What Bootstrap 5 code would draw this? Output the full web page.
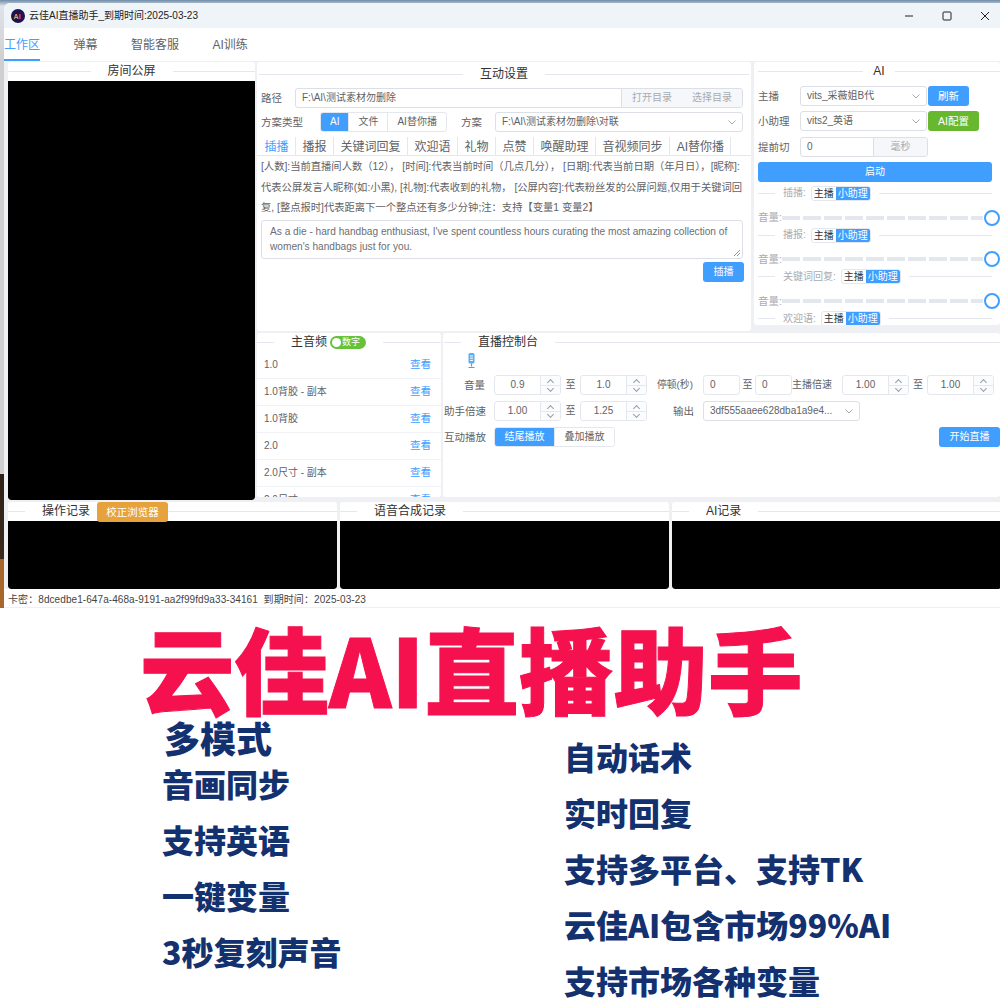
<!DOCTYPE html>
<html lang="zh-CN">
<head>
<meta charset="UTF-8">
<title>云佳AI直播助手</title>
<link href="https://cdn.jsdelivr.net/npm/bootstrap@5.3.3/dist/css/bootstrap.min.css" rel="stylesheet">
<style>
body { margin: 0; width: 1000px; height: 1000px; overflow: hidden; background: #fff; font-family: "Liberation Sans", "Noto Sans CJK SC", sans-serif; color: #606266; font-size: 10px; line-height: 1.2; }
.desk { height: 608px; padding: 3px 0 0 4px; overflow: hidden; background: linear-gradient(#6f8ca8 0, #dfe4e9 1%, #cfcfcf 10%, #cfcfcf 78%, #2d2118 78%, #3a2a1c 92%, #a8662a 92%, #a8662a 100%); }
.app-win { height: 605px; background: #eef0f4; border-radius: 6px 0 0 0; overflow: hidden; }
.title-bar { height: 25px; background: #eff4f9; color: #222; font-size: 10px; padding-left: 7px; }
.logo-text { font: 700 7px "Liberation Sans", sans-serif; }
.win-btns { margin-right: -4px; }
.win-btn { width: 38px; }
.tab-strip { height: 33px; background: #fff; font-size: 12px; gap: 33.5px; }
.tab-strip span { height: 33px; line-height: 34px; white-space: nowrap; }
.tab-strip .tab-on { color: #409eff; border-bottom: 2px solid #409eff; width: 36px; }
.work { padding: 1px 0 0 4px; gap: 2px; height: 439px; }
.box { background: #fff; border-radius: 3px; overflow: hidden; flex: none; }
.box-title { height: 19px; font-size: 12px; color: #303133; white-space: nowrap; gap: 17px; }
.box-title::before, .box-title::after { content: ""; flex: 1; border-top: 1px solid #e4e7ed; }
.box-title.left-title::before { flex: 0 0 17px; }
.title-tall { height: 25px; margin: 0 0 1px; }
.title-narrow { gap: 10px; margin-bottom: 2px; }
.black-area { background: #000; border-radius: 0 0 3px 3px; }
.col-left { width: 247px; height: 438px; }
.col-left .black-area { height: 419px; }
.col-rest { width: 743px; flex: none; }
.box-setting { width: 494px; height: 269px; padding: 0 2px; margin-right: 3px; }
.box-ai { width: 246px; height: 263px; padding: 0 0 0 4px; }
.row-lower { margin-top: 2px; }
.box-audio { width: 184px; height: 164px; margin-right: 2px; }
.box-live { width: 557px; height: 164px; padding-left: 1px; }
.line-field { height: 20px; border: 1px solid #dcdfe6; border-radius: 3px; padding: 0 6px; color: #606266; background: #fff; white-space: nowrap; overflow: hidden; }
.addon { background: #f5f7fa; color: #a8abb2; border-left: 1px solid #dcdfe6; flex: none; }
.addon-dir { width: 121px; }
.addon-ms { width: 54px; }
.chev { width: 8px; height: 8px; flex: none; }
.set-row { padding: 0 6px 0 2px; margin-bottom: 4px; }
.set-row + .set-row { margin-bottom: 5px; }
.lbl-path { width: 34px; }
.lbl-type { width: 59px; }
.lbl-plan { margin-right: 13px; }
.field-plan { width: 248px; }
.seg { border: 1px solid #e4e7ed; border-radius: 3px; height: 20px; overflow: hidden; background: #fff; flex: none; }
.seg span { padding: 0 9px; line-height: 18px; border-left: 1px solid #e4e7ed; white-space: nowrap; }
.seg .seg-on { background: #409eff; color: #fff; border-left: 0; }
.seg-wide span { padding: 0 9.5px; }
.sub-tabs { height: 19px; border-bottom: 1px solid #e4e7ed; font-size: 12px; margin: 0 -2px; }
.sub-tabs span { padding: 0 6.5px; line-height: 20px; border-right: 1px solid #e4e7ed; white-space: nowrap; }
.sub-tabs span:first-child { color: #409eff; padding-left: 7.5px; }
.hint-text { line-height: 20.5px; font-size: 10.3px; padding: 1px 0 0 2px; height: 64px; overflow: hidden; white-space: nowrap; }
.text-box { height: 39px; border: 1px solid #dcdfe6; border-radius: 3px; padding: 2.5px 8px; line-height: 15px; font-size: 10.15px; margin: 0 6px 0 2px; color: #6c6e72; position: relative; }
.grip { position: absolute; right: 1px; bottom: 1px; }
.act { color: #fff; background: #409eff; border-radius: 3px; text-align: center; white-space: nowrap; flex: none; }
.act-ins { width: 41px; height: 20px; line-height: 20px; margin: 3px 5px 0 auto; }
.ai-row { height: 25.6px; }
.ai-label { width: 42px; font-size: 10.5px; flex: none; }
.ai-row .line-field { width: 127px; flex: none; }
.ai-row .field-ms { width: 128px; }
.ai-btn { height: 20px; line-height: 20px; font-size: 10.5px; margin-left: 1px; }
.btn-refresh { width: 41px; }
.btn-config { width: 51px; background: #67b82f; }
.start-btn { height: 20px; line-height: 20px; width: 234px; margin: 2px 0 4px; }
.vol-head { height: 15px; gap: 8px; color: #a8abb2; width: 234px; }
.vol-head::before { content: ""; width: 17px; border-top: 1px solid #e4e7ed; }
.vol-head::after { content: ""; flex: 1; border-top: 1px solid #e4e7ed; }
.pill-pair { border: 1px solid #e4e7ed; border-radius: 3px; color: #303133; overflow: hidden; height: 15px; line-height: 13px; margin-left: -3px; }
.pill-pair span { padding: 0 2px; }
.pill-pair .seg-on { background: #409eff; color: #fff; }
.vol-row { height: 20px; margin: 6.8px 0 0; color: #a8abb2; font-size: 10.5px; white-space: nowrap; }
.vol-track { flex: 1; height: 4px; background: repeating-linear-gradient(90deg, #e4e7ed 0 18px, transparent 18px 21px); }
.vol-knob { width: 16px; height: 16px; border: 2px solid #409eff; border-radius: 50%; flex: none; background: #fff; margin-left: 1px; }
.aud-row { height: 27px; padding: 0 7px; border-bottom: 1px solid #f0f2f5; color: #606266; }
.aud-row b { font-weight: 400; color: #409eff; margin-left: auto; margin-right: 3px; font-size: 10.5px; margin-top: -2px; }
.num-toggle { background: #67c23a; color: #fff; border-radius: 8px; height: 13px; width: 36px; font-size: 9px; line-height: 13px; padding-left: 12px; position: relative; flex: none; margin-left: -14px; }
.num-toggle::before { content: ""; position: absolute; left: 2px; top: 2px; width: 9px; height: 9px; border-radius: 50%; background: #fff; }
.mic-row { height: 22px; padding: 1px 0 0 23px; }
.ctl-row { height: 22px; }
.ctl-row + .ctl-row { margin-top: 4px; }
.ctl-label { flex: none; white-space: nowrap; font-size: 10.5px; }
.lbl-side { width: 41px; text-align: right; margin-right: 9px; }
.lbl-pause { width: 37px; margin: 0 9px 0 10px; font-size: 9.8px; }
.lbl-main { width: 41px; margin-right: 9px; font-size: 10px; }
.lbl-out { width: 20px; margin: 0 10px 0 26px; }
.zhi-a { width: 19px; text-align: center; flex: none; }
.zhi-b { width: 15px; text-align: center; flex: none; }
.zhi-c { width: 18px; text-align: center; flex: none; }
.num-in { width: 67px; height: 20px; border: 1px solid #e4e7ed; border-radius: 3px; overflow: hidden; flex: none; }
.num-in em { flex: 1; font-style: normal; text-align: center; line-height: 18px; }
.spin { width: 20px; border-left: 1px solid #e4e7ed; background: #fbfcfd; }
.spin i { display: block; height: 9px; position: relative; }
.spin i + i { border-top: 1px solid #e4e7ed; }
.spin i::before { content: ""; position: absolute; left: 7px; top: 3.5px; width: 5px; height: 5px; border-left: 1px solid #9a9da3; border-top: 1px solid #9a9da3; transform: rotate(45deg); }
.spin i + i::before { top: -.5px; transform: rotate(225deg); }
.plain-in { width: 37px; height: 20px; line-height: 18px; border: 1px solid #e4e7ed; border-radius: 3px; padding-left: 6px; flex: none; }
.field-out { width: 157px; flex: none; }
.btn-live { width: 61px; height: 20px; line-height: 20px; }
.log-row { gap: 3px; height: 87px; margin-top: 2px; padding-left: 4px; }
.box-log { width: 329px; }
.box-log .black-area { height: 68px; }
.calib { background: #e6a23c; color: #fff; border-radius: 3px; height: 20px; line-height: 20px; width: 71px; text-align: center; font-size: 10.5px; margin: 0 -17px 0 -10px; flex: none; position: relative; }
.foot-line { height: 18px; line-height: 21px; font-size: 10px; color: #444; padding-left: 4px; letter-spacing: .08px; white-space: nowrap; background: #fff; }
.promo { position: relative; height: 392px; font-family: "Noto Sans CJK SC", "Liberation Sans", sans-serif; font-weight: 900; }
.promo-head { color: #f5104e; font-size: 94.5px; line-height: 1; white-space: nowrap; padding: 12px 0 0 140px; height: 111px; -webkit-text-stroke: 1px #f5104e; }
.promo-cols { color: #13306f; font-size: 32px; line-height: 1; white-space: nowrap; }
.promo-left { width: 564px; padding-left: 162px; flex: none; }
.promo-item { height: 56px; }
.item-top { font-size: 36px; height: 48px; padding-left: 2px; }
.promo-right { padding-top: 21px; }
</style>
</head>
<body>
<div class="desk">
  <div class="app-win">
    <div class="title-bar d-flex align-items-center">
      <svg width="14" height="14" viewBox="0 0 14 14" class="me-1"><circle cx="7" cy="7" r="7" fill="#1c1452"/><text x="2.600" y="9.600" class="logo-text" fill="#f0a030">A<tspan fill="#e85a9a">I</tspan></text></svg>
      <span>云佳AI直播助手_到期时间:2025-03-23</span>
      <div class="win-btns ms-auto d-flex align-items-center">
        <span class="win-btn text-center"><svg width="10" height="10" viewBox="0 0 10 10"><path d="M1 5h8" stroke="#222" stroke-width="1"/></svg></span>
        <span class="win-btn text-center"><svg width="10" height="10" viewBox="0 0 10 10"><rect x="1" y="1" width="8" height="8" rx="1" fill="none" stroke="#222"/></svg></span>
        <span class="win-btn text-center"><svg width="10" height="10" viewBox="0 0 10 10"><path d="M1 1l8 8M9 1l-8 8" stroke="#222"/></svg></span>
      </div>
    </div>
    <div class="tab-strip d-flex">
      <span class="tab-on">工作区</span>
      <span>弹幕</span>
      <span>智能客服</span>
      <span>AI训练</span>
    </div>
    <div class="work d-flex">
      <div class="col-left box">
        <div class="box-title d-flex align-items-center">房间公屏</div>
        <div class="black-area"></div>
      </div>
      <div class="col-rest">
        <div class="d-flex">
          <div class="box box-setting">
            <div class="box-title title-tall d-flex align-items-center">互动设置</div>
            <div class="set-row d-flex align-items-center">
              <span class="ctl-label lbl-path">路径</span>
              <div class="line-field d-flex align-items-center flex-grow-1 pe-0">F:\AI\测试素材勿删除
                <span class="addon addon-dir ms-auto d-flex align-items-center justify-content-around h-100">
                  <span>打开目录</span><span>选择目录</span>
                </span>
              </div>
            </div>
            <div class="set-row d-flex align-items-center">
              <span class="ctl-label lbl-type">方案类型</span>
              <div class="seg d-flex"><span class="seg-on">AI</span><span>文件</span><span>AI替你播</span></div>
              <span class="ms-auto ctl-label lbl-plan">方案</span>
              <div class="line-field field-plan d-flex align-items-center">F:\AI\测试素材勿删除\对联
                <svg class="chev ms-auto" viewBox="0 0 8 8"><path d="M.5 2.500 4 6l3.500-3.500" fill="none" stroke="#a8abb2"/></svg>
              </div>
            </div>
            <div class="sub-tabs d-flex">
              <span>插播</span><span>播报</span><span>关键词回复</span><span>欢迎语</span><span>礼物</span><span>点赞</span><span>唤醒助理</span><span>音视频同步</span><span>AI替你播</span>
            </div>
            <div class="hint-text">[人数]:当前直播间人数（12）， [时间]:代表当前时间（几点几分）， [日期]:代表当前日期（年月日），[昵称]:<br>代表公屏发言人昵称(如:小黑), [礼物]:代表收到的礼物， [公屏内容]:代表粉丝发的公屏问题,仅用于关键词回<br>复, [整点报时]代表距离下一个整点还有多少分钟;注：支持【变量1 变量2】</div>
            <div class="text-box">As a die - hard handbag enthusiast, I've spent countless hours curating the most amazing collection of women's handbags just for you.
              <svg class="grip" width="8" height="8" viewBox="0 0 8 8"><path d="M1 7 7 1M4 7l3-3" stroke="#777" stroke-width=".8"/></svg>
            </div>
            <div class="act act-ins">插播</div>
          </div>
          <div class="box box-ai">
            <div class="box-title title-narrow d-flex align-items-center">AI</div>
            <div class="ai-row d-flex align-items-center">
              <span class="ai-label">主播</span>
              <div class="line-field d-flex align-items-center">vits_采薇姐B代<svg class="chev ms-auto" viewBox="0 0 8 8"><path d="M.5 2.500 4 6l3.500-3.500" fill="none" stroke="#a8abb2"/></svg></div>
              <div class="act ai-btn btn-refresh">刷新</div>
            </div>
            <div class="ai-row d-flex align-items-center">
              <span class="ai-label">小助理</span>
              <div class="line-field d-flex align-items-center">vits2_英语<svg class="chev ms-auto" viewBox="0 0 8 8"><path d="M.5 2.500 4 6l3.500-3.500" fill="none" stroke="#a8abb2"/></svg></div>
              <div class="act ai-btn btn-config">AI配置</div>
            </div>
            <div class="ai-row d-flex align-items-center">
              <span class="ai-label">提前切</span>
              <div class="line-field field-ms d-flex align-items-center pe-0">0<span class="addon addon-ms ms-auto h-100 d-flex align-items-center justify-content-center">毫秒</span></div>
            </div>
            <div class="act start-btn">启动</div>
            <div class="vol-head d-flex align-items-center"><span>插播:</span><span class="pill-pair d-flex"><span>主播</span><span class="seg-on">小助理</span></span></div>
            <div class="vol-row d-flex align-items-center">音量:<div class="vol-track"></div><div class="vol-knob"></div></div>
            <div class="vol-head d-flex align-items-center"><span>播报:</span><span class="pill-pair d-flex"><span>主播</span><span class="seg-on">小助理</span></span></div>
            <div class="vol-row d-flex align-items-center">音量:<div class="vol-track"></div><div class="vol-knob"></div></div>
            <div class="vol-head d-flex align-items-center"><span>关键词回复:</span><span class="pill-pair d-flex"><span>主播</span><span class="seg-on">小助理</span></span></div>
            <div class="vol-row d-flex align-items-center">音量:<div class="vol-track"></div><div class="vol-knob"></div></div>
            <div class="vol-head d-flex align-items-center"><span>欢迎语:</span><span class="pill-pair d-flex"><span>主播</span><span class="seg-on">小助理</span></span></div>
          </div>
        </div>
        <div class="row-lower d-flex">
          <div class="box box-audio">
            <div class="box-title left-title d-flex align-items-center">主音频<span class="num-toggle">数字</span></div>
            <div class="aud-row d-flex align-items-center">1.0<b>查看</b></div>
            <div class="aud-row d-flex align-items-center">1.0背胶 - 副本<b>查看</b></div>
            <div class="aud-row d-flex align-items-center">1.0背胶<b>查看</b></div>
            <div class="aud-row d-flex align-items-center">2.0<b>查看</b></div>
            <div class="aud-row d-flex align-items-center">2.0尺寸 - 副本<b>查看</b></div>
            <div class="aud-row d-flex align-items-center">2.0尺寸<b>查看</b></div>
          </div>
          <div class="box box-live">
            <div class="box-title left-title d-flex align-items-center">直播控制台</div>
            <div class="mic-row"><svg class="d-block" width="9" height="15" viewBox="0 0 9 15"><rect x="1.500" y="0" width="6" height="10.500" rx="1.500" fill="#58aef5"/><path d="M3 3h3M3 5.200h3M3 7.400h3" stroke="#fff"/><path d="M4.500 10.500v3M1.500 14.500h6" stroke="#409eff" stroke-width="1.200"/></svg></div>
            <div class="ctl-row d-flex align-items-center">
              <span class="ctl-label lbl-side">音量</span>
              <div class="num-in d-flex"><em>0.9</em><span class="spin"><i></i><i></i></span></div>
              <span class="zhi-a">至</span>
              <div class="num-in d-flex"><em>1.0</em><span class="spin"><i></i><i></i></span></div>
              <span class="ctl-label lbl-pause">停顿(秒)</span>
              <div class="plain-in">0</div>
              <span class="zhi-b">至</span>
              <div class="plain-in">0</div>
              <span class="ctl-label lbl-main">主播倍速</span>
              <div class="num-in d-flex"><em>1.00</em><span class="spin"><i></i><i></i></span></div>
              <span class="zhi-c">至</span>
              <div class="num-in d-flex"><em>1.00</em><span class="spin"><i></i><i></i></span></div>
            </div>
            <div class="ctl-row d-flex align-items-center">
              <span class="ctl-label lbl-side">助手倍速</span>
              <div class="num-in d-flex"><em>1.00</em><span class="spin"><i></i><i></i></span></div>
              <span class="zhi-a">至</span>
              <div class="num-in d-flex"><em>1.25</em><span class="spin"><i></i><i></i></span></div>
              <span class="ctl-label lbl-out">输出</span>
              <div class="line-field field-out d-flex align-items-center">3df555aaee628dba1a9e4...<svg class="chev ms-auto" viewBox="0 0 8 8"><path d="M.500 2.500 4 6l3.500-3.500" fill="none" stroke="#a8abb2"/></svg></div>
            </div>
            <div class="ctl-row d-flex align-items-center">
              <span class="ctl-label lbl-side">互动播放</span>
              <div class="seg seg-wide d-flex"><span class="seg-on">结尾播放</span><span>叠加播放</span></div>
              <div class="act btn-live ms-auto">开始直播</div>
            </div>
          </div>
        </div>
      </div>
    </div>
    <div class="log-row d-flex">
      <div class="box box-log">
        <div class="box-title left-title d-flex align-items-center">操作记录<span class="calib">校正浏览器</span></div>
        <div class="black-area"></div>
      </div>
      <div class="box box-log">
        <div class="box-title left-title d-flex align-items-center">语音合成记录</div>
        <div class="black-area"></div>
      </div>
      <div class="box box-log">
        <div class="box-title left-title d-flex align-items-center">AI记录</div>
        <div class="black-area"></div>
      </div>
    </div>
    <div class="foot-line">卡密：8dcedbe1-647a-468a-9191-aa2f99fd9a33-34161&nbsp; 到期时间：2025-03-23</div>
  </div>
</div>
<div class="promo">
  <div class="promo-head">云佳AI直播助手</div>
  <div class="promo-cols d-flex">
    <div class="promo-left">
      <div class="item-top">多模式</div>
      <div class="promo-item">音画同步</div>
      <div class="promo-item">支持英语</div>
      <div class="promo-item">一键变量</div>
      <div class="promo-item">3秒复刻声音</div>
    </div>
    <div class="promo-right">
      <div class="promo-item">自动话术</div>
      <div class="promo-item">实时回复</div>
      <div class="promo-item">支持多平台、支持TK</div>
      <div class="promo-item">云佳AI包含市场99%AI</div>
      <div class="promo-item">支持市场各种变量</div>
    </div>
  </div>
</div>
<script src="https://cdn.jsdelivr.net/npm/bootstrap@5.3.3/dist/js/bootstrap.bundle.min.js"></script>
</body>
</html>
